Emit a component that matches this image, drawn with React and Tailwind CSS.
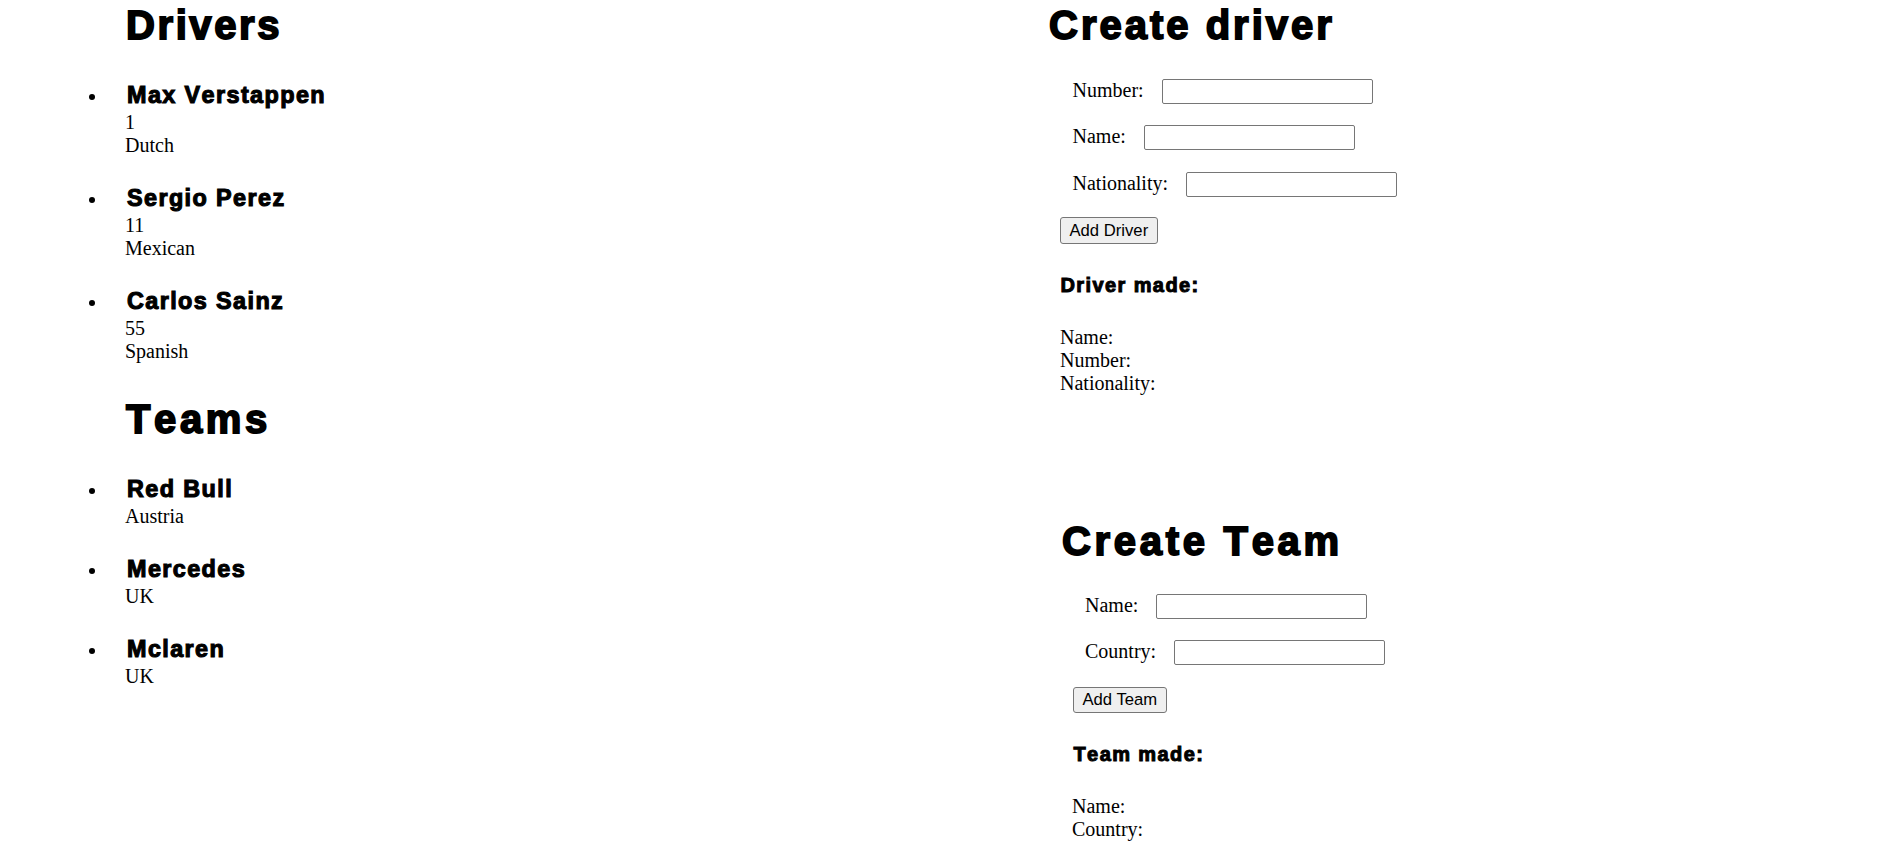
import React from 'react';

const drivers = [
  { name: 'Max Verstappen', number: '1', nationality: 'Dutch' },
  { name: 'Sergio Perez', number: '11', nationality: 'Mexican' },
  { name: 'Carlos Sainz', number: '55', nationality: 'Spanish' },
];

const teams = [
  { name: 'Red Bull', country: 'Austria' },
  { name: 'Mercedes', country: 'UK' },
  { name: 'Mclaren', country: 'UK' },
];

// headings in the shot look fake-bolded, so thicken a bit with a stroke
const sans = "font-['Liberation_Sans',Arial,sans-serif] font-bold text-black [font-kerning:none]";
const h1Cls = `${sans} text-[40px] leading-[46px] [-webkit-text-stroke:1.8px_#000]`;
const h3Cls = `${sans} text-[23.4px] leading-[27px] tracking-[1.4px] [-webkit-text-stroke:1.1px_#000]`;
const h4Cls = `${sans} text-[20px] leading-[23px] tracking-[1.4px] [-webkit-text-stroke:1px_#000]`;

const ListItem = ({ title, lines }) => (
  <li className="flex">
    <span className="mt-[12.5px] size-[6px] shrink-0 rounded-full bg-black" />
    <div className="ml-[30px]">
      <h3 className={`${h3Cls} ml-[2px]`}>{title}</h3>
      <div className="mt-[2px]">
        {lines.map((l, i) => (
          <div key={i}>{l}</div>
        ))}
      </div>
    </div>
  </li>
);

const Field = ({ label }) => (
  <div className="flex items-start">
    <label className="mr-[18px]">{label}</label>
    <input
      type="text"
      className="h-[25px] w-[211px] rounded-[2px] border border-[#767676] bg-white px-[2px] outline-none"
    />
  </div>
);

const Button = ({ children }) => (
  <button className="h-[26.4px] rounded-[3px] border border-[#767676] bg-[#efefef] px-[8.5px] font-['Liberation_Sans',Arial,sans-serif] text-[16.67px] leading-[19px] text-black">
    {children}
  </button>
);

export default function App() {
  return (
    <div className="flex min-h-screen bg-white font-['Liberation_Serif','Times_New_Roman',serif] text-[20px] leading-[23px] text-black">
      {/* Lists */}
      <div className="w-[1047px] shrink-0 pt-[2px]">
        <h1 className={`${h1Cls} tracking-[2.6px] pl-[126px]`}>Drivers</h1>
        <ul className="mt-[33.5px] flex flex-col gap-[28px] pl-[89px]">
          {drivers.map((d) => (
            <ListItem key={d.name} title={d.name} lines={[d.number, d.nationality]} />
          ))}
        </ul>
        <h1 className={`${h1Cls} tracking-[3.6px] mt-[33.6px] pl-[126px]`}>Teams</h1>
        <ul className="mt-[33.5px] flex flex-col gap-[28px] pl-[89px]">
          {teams.map((t) => (
            <ListItem key={t.name} title={t.name} lines={[t.country]} />
          ))}
        </ul>
      </div>

      {/* Forms */}
      <div className="flex flex-col items-start pt-[2px]">
        <h1 className={`${h1Cls} tracking-[3px] ml-[2px]`}>Create driver</h1>
        <div className="mt-[30.7px] flex flex-col gap-[21.5px] pl-[25.5px]">
          <Field label="Number:" />
          <Field label="Name:" />
          <Field label="Nationality:" />
        </div>
        <div className="ml-[13px] mt-[20.6px]">
          <Button>Add Driver</Button>
        </div>
        <h4 className={`${h4Cls} ml-[13.5px] mt-[30px]`}>Driver made:</h4>
        <div className="ml-[13px] mt-[29.5px]">
          <div>Name:</div>
          <div>Number:</div>
          <div>Nationality:</div>
        </div>

        <h1 className={`${h1Cls} tracking-[3.7px] ml-[15px] mt-[122.5px]`}>Create Team</h1>
        <div className="mt-[30px] flex flex-col gap-[21.5px] pl-[38px]">
          <Field label="Name:" />
          <Field label="Country:" />
        </div>
        <div className="ml-[26px] mt-[21.4px]">
          <Button>Add Team</Button>
        </div>
        <h4 className={`${h4Cls} ml-[26.5px] mt-[30px]`}>Team made:</h4>
        <div className="ml-[25px] mt-[29.2px]">
          <div>Name:</div>
          <div>Country:</div>
        </div>
      </div>
    </div>
  );
}
